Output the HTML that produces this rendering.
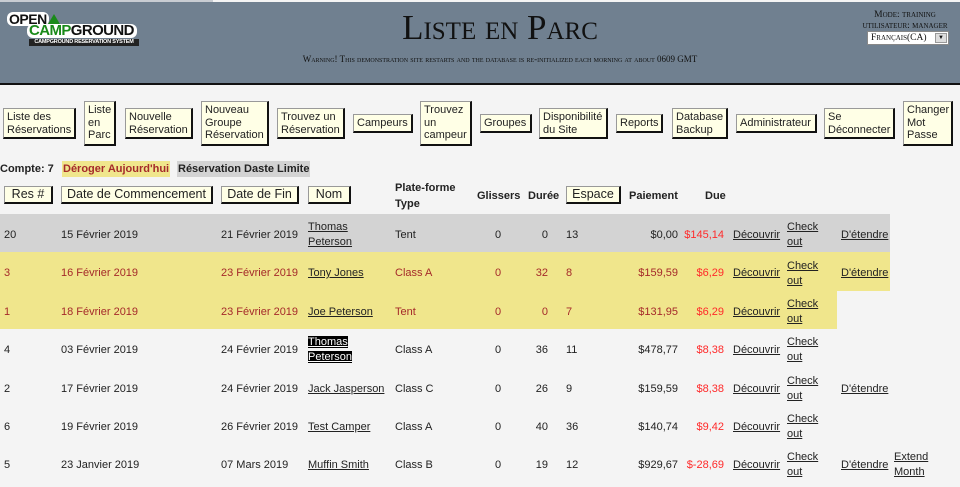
<!DOCTYPE html>
<html><head><meta charset="utf-8">
<style>
*{margin:0;padding:0;box-sizing:border-box}
body{width:960px;height:485px;background:#f4f4f4;font-family:"Liberation Sans",sans-serif;font-size:11px;color:#222;position:relative;overflow:hidden}
#hdr{position:absolute;left:0;top:2px;width:960px;height:83px;background:#708090;border-bottom:2px solid #111}
#topline{position:absolute;left:0;top:0;width:213px;height:2px;background:#c8ccd2}
.t{position:absolute;font-family:"Liberation Serif",serif;color:#111;font-variant:small-caps;white-space:nowrap}
.b{position:absolute;background:#ffffe6;border:1px solid #999;border-right:2px solid #111;border-bottom:2px solid #111;font-size:11px;line-height:12.5px;padding:2px 3px;color:#222;white-space:nowrap}
.hb{position:absolute;top:186px;height:18px;background:#ffffe6;border:1px solid #999;border-right:2px solid #111;border-bottom:2px solid #111;font-size:12.5px;line-height:15px;text-align:center;color:#222}
.h{position:absolute;font-weight:bold;font-size:11px;color:#222;line-height:16px}
.s{position:absolute;white-space:nowrap;line-height:15px}
.r{text-align:right}
.c{text-align:center}
u{text-decoration:underline}
.red{color:#ff2a2a}
.dk{color:#a52a2a}
.bg{position:absolute;left:0}
.rows{position:absolute;left:0;top:2px;width:960px;height:485px}
</style></head><body>
<div id="topline"></div>
<div id="hdr"></div>
<!-- logo -->
<div style="position:absolute;left:7px;top:12px;width:134px;height:36px">
 <div style="position:absolute;left:0;top:0;font:bold 14px/14px 'Liberation Sans',sans-serif;color:#111;letter-spacing:-0.5px;background:#fff;border-radius:6px;padding:0 2px">OPEN</div>
 <div style="position:absolute;left:34px;top:2px;width:0;height:0;border-left:13px solid transparent;border-right:13px solid transparent;border-bottom:22px solid #1a8a1a"></div>
 <div style="position:absolute;left:20px;top:12px;font:bold 15px/14px 'Liberation Sans',sans-serif;color:#111;letter-spacing:-0.6px;background:#fff;border-radius:6px;padding:0 3px 0 2px"><span style="color:#1a8a1a">C</span><span style="color:#1a8a1a">A</span><span style="color:#1a8a1a">MP</span>GROUND</div>
 <div style="position:absolute;left:22px;top:27px;width:110px;height:7px;background:#222;color:#fff;font:bold 5.5px 'Liberation Sans',sans-serif;line-height:7px;text-align:center;letter-spacing:-0.2px">CAMPGROUND RESERVATION SYSTEM</div>
</div>
<div class="t" style="left:300px;top:8px;width:400px;text-align:center;font-size:35px;line-height:40px">Liste en Parc</div>
<div class="t" style="left:250px;top:54px;width:500px;text-align:center;font-size:9px;line-height:11px">Warning! This demonstration site restarts and the database is re-initialized each morning at about 0609 GMT</div>
<div class="t" style="left:855px;top:10px;width:100px;text-align:center;font-size:9.5px;line-height:11px">Mode: training<br>utilisateur: manager</div>
<div style="position:absolute;left:867px;top:31px;width:82px;height:14px;background:#fff;border:1px solid #888;font-family:'Liberation Serif',serif;font-variant:small-caps;font-size:9.5px;line-height:12px;padding-left:3px;color:#111">Français(CA)
 <div style="position:absolute;right:1px;top:1px;width:12px;height:10px;background:#ddd;border:1px solid #999;font-size:6px;line-height:8px;text-align:center">▼</div></div>

<!-- nav buttons -->
<div class="b" style="left:3px;top:108px;width:73px;height:31px">Liste des<br>Réservations</div>
<div class="b" style="left:84px;top:101px;width:32px;height:45px">Liste<br>en<br>Parc</div>
<div class="b" style="left:125px;top:108px;width:68px;height:31px">Nouvelle<br>Réservation</div>
<div class="b" style="left:201px;top:101px;width:68px;height:45px">Nouveau<br>Groupe<br>Réservation</div>
<div class="b" style="left:277px;top:108px;width:68px;height:31px">Trouvez un<br>Réservation</div>
<div class="b" style="left:353px;top:114px;width:60px;height:19px">Campeurs</div>
<div class="b" style="left:420px;top:101px;width:52px;height:45px">Trouvez<br>un<br>campeur</div>
<div class="b" style="left:480px;top:114px;width:52px;height:19px">Groupes</div>
<div class="b" style="left:539px;top:108px;width:69px;height:31px">Disponibilité<br>du Site</div>
<div class="b" style="left:616px;top:114px;width:47px;height:19px">Reports</div>
<div class="b" style="left:672px;top:108px;width:56px;height:31px">Database<br>Backup</div>
<div class="b" style="left:736px;top:114px;width:81px;height:19px">Administrateur</div>
<div class="b" style="left:824px;top:108px;width:71px;height:31px">Se<br>Déconnecter</div>
<div class="b" style="left:903px;top:101px;width:50px;height:45px">Changer<br>Mot<br>Passe</div>

<!-- compte line -->
<div class="h" style="left:0;top:161px">Compte: 7</div>
<div class="h" style="left:62px;top:161px;background:#f0e68c;color:#a52a2a;padding:0 1px">Déroger Aujourd'hui</div>
<div class="h" style="left:177px;top:161px;background:#d3d3d3;padding:0 1px">Réservation Daste Limite</div>

<!-- header -->
<div class="hb" style="left:4px;width:49px">Res #</div>
<div class="hb" style="left:61px;width:152px">Date de Commencement</div>
<div class="hb" style="left:221px;width:78px">Date de Fin</div>
<div class="hb" style="left:308px;width:43px">Nom</div>
<div class="h" style="left:395px;top:180px">Plate-forme<br>Type</div>
<div class="h" style="left:477px;top:188px">Glissers</div>
<div class="h" style="left:528px;top:188px">Durée</div>
<div class="hb" style="left:566px;width:55px">Espace</div>
<div class="h" style="left:629px;top:188px">Paiement</div>
<div class="h" style="left:705px;top:188px">Due</div>

<!-- row backgrounds -->
<div class="bg" style="top:214px;width:890px;height:38px;background:#d3d3d3"></div>
<div class="bg" style="top:252px;width:890px;height:39px;background:#f0e68c"></div>
<div class="bg" style="top:291px;width:837px;height:38px;background:#f0e68c"></div>

<div class="rows">
<!-- row 1 -->
<div class="s" style="left:4px;top:226px">20</div>
<div class="s" style="left:61px;top:226px">15 Février 2019</div>
<div class="s" style="left:221px;top:226px">21 Février 2019</div>
<div class="s" style="left:308px;top:218px"><u>Thomas</u><br><u>Peterson</u></div>
<div class="s" style="left:395px;top:226px">Tent</div>
<div class="s c" style="left:488px;top:226px;width:20px">0</div>
<div class="s r" style="left:528px;top:226px;width:20px">0</div>
<div class="s" style="left:566px;top:226px">13</div>
<div class="s r" style="left:600px;top:226px;width:78px">$0,00</div>
<div class="s r red" style="left:660px;top:226px;width:64px">$145,14</div>
<div class="s" style="left:733px;top:226px"><u>Découvrir</u></div>
<div class="s" style="left:787px;top:218px"><u>Check</u><br><u>out</u></div>
<div class="s" style="left:841px;top:226px"><u>D'étendre</u></div>

<!-- row 2 -->
<div class="dk">
<div class="s" style="left:4px;top:264px">3</div>
<div class="s" style="left:61px;top:264px">16 Février 2019</div>
<div class="s" style="left:221px;top:264px">23 Février 2019</div>
<div class="s" style="left:395px;top:264px">Class A</div>
<div class="s c" style="left:488px;top:264px;width:20px">0</div>
<div class="s r" style="left:528px;top:264px;width:20px">32</div>
<div class="s" style="left:566px;top:264px">8</div>
<div class="s r" style="left:600px;top:264px;width:78px">$159,59</div>
</div>
<div class="s" style="left:308px;top:264px"><u>Tony Jones</u></div>
<div class="s r red" style="left:660px;top:264px;width:64px">$6,29</div>
<div class="s" style="left:733px;top:264px"><u>Découvrir</u></div>
<div class="s" style="left:787px;top:257px"><u>Check</u><br><u>out</u></div>
<div class="s" style="left:841px;top:264px"><u>D'étendre</u></div>

<!-- row 3 -->
<div class="dk">
<div class="s" style="left:4px;top:303px">1</div>
<div class="s" style="left:61px;top:303px">18 Février 2019</div>
<div class="s" style="left:221px;top:303px">23 Février 2019</div>
<div class="s" style="left:395px;top:303px">Tent</div>
<div class="s c" style="left:488px;top:303px;width:20px">0</div>
<div class="s r" style="left:528px;top:303px;width:20px">0</div>
<div class="s" style="left:566px;top:303px">7</div>
<div class="s r" style="left:600px;top:303px;width:78px">$131,95</div>
</div>
<div class="s" style="left:308px;top:303px"><u>Joe Peterson</u></div>
<div class="s r red" style="left:660px;top:303px;width:64px">$6,29</div>
<div class="s" style="left:733px;top:303px"><u>Découvrir</u></div>
<div class="s" style="left:787px;top:295px"><u>Check</u><br><u>out</u></div>

<!-- row 4 -->
<div class="s" style="left:4px;top:341px">4</div>
<div class="s" style="left:61px;top:341px">03 Février 2019</div>
<div class="s" style="left:221px;top:341px">24 Février 2019</div>
<div class="s" style="left:308px;top:333px"><u style="background:#000;color:#fff">Thomas</u><br><u style="background:#000;color:#fff">Peterson</u></div>
<div class="s" style="left:395px;top:341px">Class A</div>
<div class="s c" style="left:488px;top:341px;width:20px">0</div>
<div class="s r" style="left:528px;top:341px;width:20px">36</div>
<div class="s" style="left:566px;top:341px">11</div>
<div class="s r" style="left:600px;top:341px;width:78px">$478,77</div>
<div class="s r red" style="left:660px;top:341px;width:64px">$8,38</div>
<div class="s" style="left:733px;top:341px"><u>Découvrir</u></div>
<div class="s" style="left:787px;top:333px"><u>Check</u><br><u>out</u></div>

<!-- row 5 -->
<div class="s" style="left:4px;top:380px">2</div>
<div class="s" style="left:61px;top:380px">17 Février 2019</div>
<div class="s" style="left:221px;top:380px">24 Février 2019</div>
<div class="s" style="left:308px;top:380px"><u>Jack Jasperson</u></div>
<div class="s" style="left:395px;top:380px">Class C</div>
<div class="s c" style="left:488px;top:380px;width:20px">0</div>
<div class="s r" style="left:528px;top:380px;width:20px">26</div>
<div class="s" style="left:566px;top:380px">9</div>
<div class="s r" style="left:600px;top:380px;width:78px">$159,59</div>
<div class="s r red" style="left:660px;top:380px;width:64px">$8,38</div>
<div class="s" style="left:733px;top:380px"><u>Découvrir</u></div>
<div class="s" style="left:787px;top:372px"><u>Check</u><br><u>out</u></div>
<div class="s" style="left:841px;top:380px"><u>D'étendre</u></div>

<!-- row 6 -->
<div class="s" style="left:4px;top:418px">6</div>
<div class="s" style="left:61px;top:418px">19 Février 2019</div>
<div class="s" style="left:221px;top:418px">26 Février 2019</div>
<div class="s" style="left:308px;top:418px"><u>Test Camper</u></div>
<div class="s" style="left:395px;top:418px">Class A</div>
<div class="s c" style="left:488px;top:418px;width:20px">0</div>
<div class="s r" style="left:528px;top:418px;width:20px">40</div>
<div class="s" style="left:566px;top:418px">36</div>
<div class="s r" style="left:600px;top:418px;width:78px">$140,74</div>
<div class="s r red" style="left:660px;top:418px;width:64px">$9,42</div>
<div class="s" style="left:733px;top:418px"><u>Découvrir</u></div>
<div class="s" style="left:787px;top:410px"><u>Check</u><br><u>out</u></div>

<!-- row 7 -->
<div class="s" style="left:4px;top:456px">5</div>
<div class="s" style="left:61px;top:456px">23 Janvier 2019</div>
<div class="s" style="left:221px;top:456px">07 Mars 2019</div>
<div class="s" style="left:308px;top:456px"><u>Muffin Smith</u></div>
<div class="s" style="left:395px;top:456px">Class B</div>
<div class="s c" style="left:488px;top:456px;width:20px">0</div>
<div class="s r" style="left:528px;top:456px;width:20px">19</div>
<div class="s" style="left:566px;top:456px">12</div>
<div class="s r" style="left:600px;top:456px;width:78px">$929,67</div>
<div class="s r red" style="left:650px;top:456px;width:74px">$-28,69</div>
<div class="s" style="left:733px;top:456px"><u>Découvrir</u></div>
<div class="s" style="left:787px;top:448px"><u>Check</u><br><u>out</u></div>
<div class="s" style="left:841px;top:456px"><u>D'étendre</u></div>
<div class="s" style="left:894px;top:448px"><u>Extend</u><br><u>Month</u></div>
</div>
</body></html>
